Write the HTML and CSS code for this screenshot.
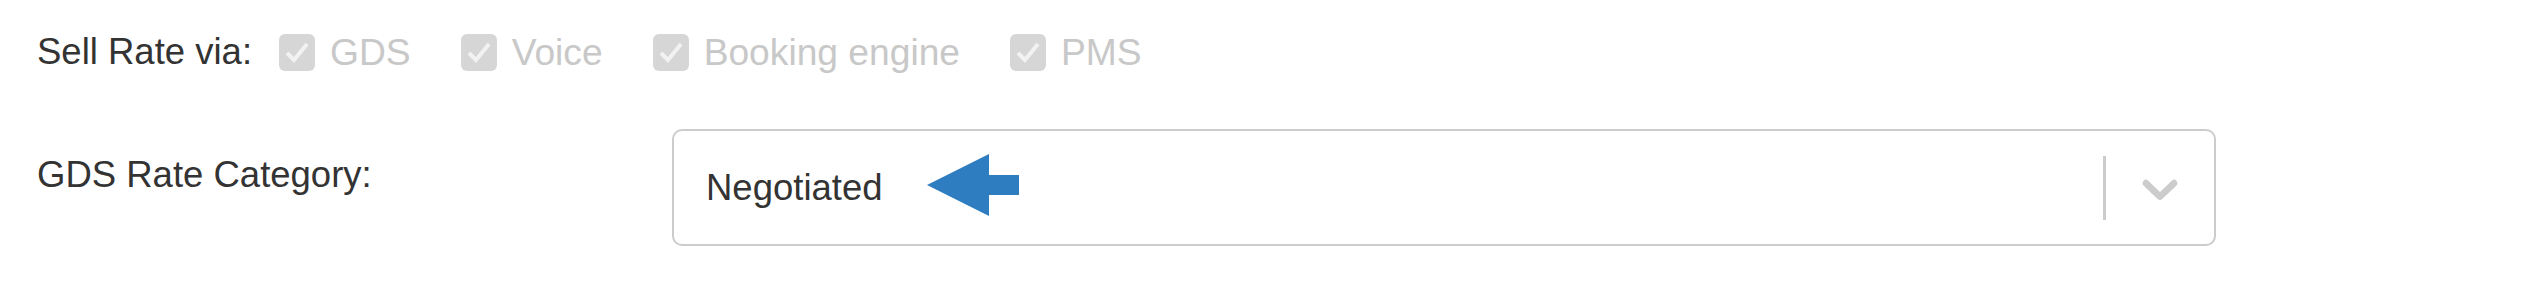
FILE: index.html
```html
<!DOCTYPE html>
<html lang="en">
<head>
    <meta charset="UTF-8">
    <title>Rate settings</title>
    <link rel="stylesheet" href="styles.css">
</head>
<body>

    <div class="form">
        <!-- Sell rate channels -->
        <div class="row channels">
            <span class="label">Sell Rate via:</span>
            <label class="check">
                <span class="box"><svg viewBox="0 0 36 36"><path d="M8 19 L15 26 L28 10"/></svg></span>
                GDS
            </label>
            <label class="check">
                <span class="box"><svg viewBox="0 0 36 36"><path d="M8 19 L15 26 L28 10"/></svg></span>
                Voice
            </label>
            <label class="check">
                <span class="box"><svg viewBox="0 0 36 36"><path d="M8 19 L15 26 L28 10"/></svg></span>
                Booking engine
            </label>
            <label class="check">
                <span class="box"><svg viewBox="0 0 36 36"><path d="M8 19 L15 26 L28 10"/></svg></span>
                PMS
            </label>
        </div>

        <!-- GDS category -->
        <div class="row category">
            <span class="label wide">GDS Rate Category:</span>
            <div class="select">
                <div class="value">
                    Negotiated
                    <svg class="pointer" viewBox="0 0 92 62"><path d="M0 31 L62 0 L62 21 L92 21 L92 41 L62 41 L62 62 Z"/></svg>
                </div>
                <span class="separator"></span>
                <span class="indicator">
                    <svg viewBox="0 0 20 20"><path d="M4.516 7.548c0.436-0.446 1.043-0.481 1.576 0l3.908 3.747 3.908-3.747c0.533-0.481 1.141-0.446 1.574 0 0.436 0.445 0.408 1.197 0 1.615-0.406 0.418-4.695 4.502-4.695 4.502-0.217 0.223-0.502 0.335-0.787 0.335s-0.57-0.112-0.789-0.335c0 0-4.287-4.084-4.695-4.502s-0.436-1.17 0-1.615z"/></svg>
                </span>
            </div>
        </div>
    </div>

</body>
</html>
```

FILE: styles.css
```css
body {
    font-family: 'Liberation Sans', Arial, sans-serif;
    font-size: 36.5px;
    background-color: #fff;
    color: #333;
    margin: 0;
    padding: 0;
}

.form {
    padding-left: 37px;
}

.row {
    display: flex;
}

.channels {
    height: 104px;
    align-items: center;
}

.channels .label {
    margin-right: 27px;
}

.check {
    display: flex;
    align-items: center;
    font-size: 37.2px;
    color: #c8c8c8;
    margin-right: 50px;
}

.check .box {
    width: 36px;
    height: 37px;
    border-radius: 6px;
    background-color: #d6d6d6;
    margin-right: 15px;
    display: flex;
    align-items: center;
    justify-content: center;
}

.check .box svg {
    width: 36px;
    height: 36px;
}

.check .box path {
    fill: none;
    stroke: #f2f2f2;
    stroke-width: 4;
}

.category {
    margin-top: 25px;
    align-items: flex-start;
}

.label.wide {
    width: 635px;
    padding-top: 25px;
}

/* Auswahlfeld */
.select {
    width: 1540px;
    height: 113px;
    border: 2px solid #cccccc;
    border-radius: 10px;
    display: flex;
    align-items: center;
}

.select .value {
    flex: 1;
    padding-left: 32px;
    display: flex;
    align-items: center;
    position: relative;
}

.pointer {
    position: absolute;
    left: 253px;
    top: 50%;
    margin-top: -34px;
    width: 92px;
    height: 62px;
    fill: #2e7dc0;
}

.separator {
    width: 3px;
    height: 64px;
    background-color: #cccccc;
}

.indicator {
    padding: 0 24px;
    display: flex;
}

.indicator svg {
    width: 60px;
    height: 60px;
    fill: #cccccc;
}
```
